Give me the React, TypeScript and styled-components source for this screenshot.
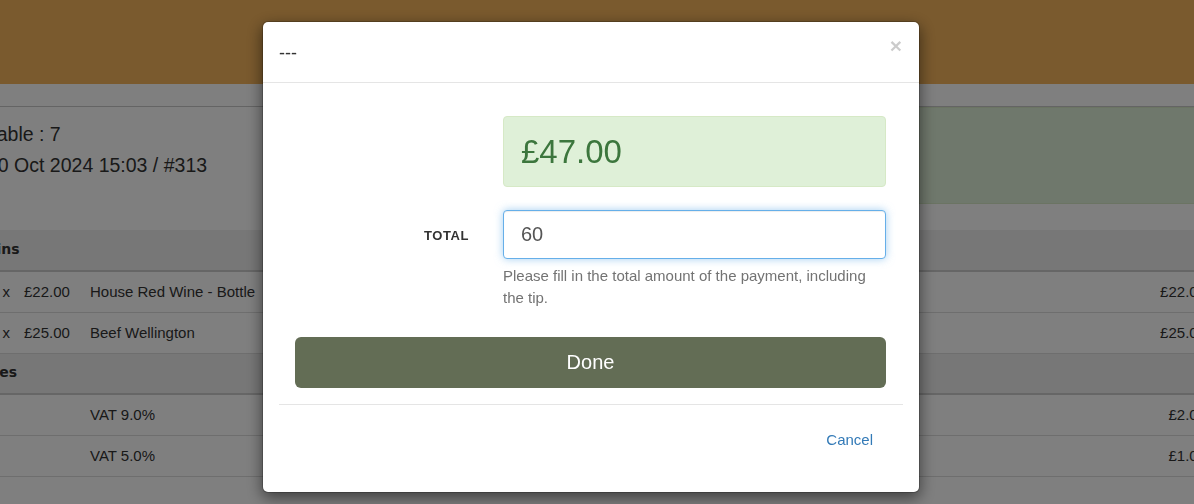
import React, { useEffect, useRef } from "react";
import styled, { createGlobalStyle } from "styled-components";

const GlobalStyle = createGlobalStyle`
  html, body {
    margin: 0;
    padding: 0;
    background: #fff;
    overflow: hidden;
  }
  body {
    font-family: "Liberation Sans", Arial, sans-serif;
    font-size: 14px;
    line-height: 1.42857;
    color: #333;
  }
  * {
    box-sizing: border-box;
  }
`;

const Page = styled.div`
  margin-left: -35px;
  width: calc(100vw + 55px);
  height: 504px;
`;

const TopBar = styled.header`
  height: 84px;
  background: #f4b45c;
`;

const SubBar = styled.div`
  height: 23px;
  border-bottom: 1px solid #c8c8c8;
`;

const Info = styled.section`
  display: grid;
  grid-template-columns: 1fr 560px;
  height: 97px;
`;

const InfoText = styled.div`
  padding: 12px 0 0 22px;
  font-size: 19.5px;
  line-height: 31px;
  color: #333;
`;

const StatusBox = styled.div`
  background: #dff0d8;
  border: 1px solid #d6e9c6;
`;

const Table = styled.table`
  margin-top: 26px;
  width: 100%;
  border-collapse: collapse;
  font-size: 15px;
  line-height: 20px;
`;

const GroupCell = styled.th`
  height: 41px;
  padding: 0 8px 2px;
  text-align: left;
  font-family: "DejaVu Sans", "Liberation Sans", sans-serif;
  font-size: 14px;
  font-weight: bold;
  line-height: 20px;
  background: #eee;
  border-bottom: 2px solid #ccc;
`;

const Cell = styled.td<{ $align?: "left" | "right"; $width?: number }>`
  height: 41px;
  padding: 0 8px;
  text-align: ${(p) => p.$align || "left"};
  width: ${(p) => (p.$width ? `${p.$width}px` : "auto")};
  border-bottom: 1px solid #ddd;
  white-space: nowrap;
`;

const PriceCell = styled(Cell)`
  padding-left: 6px;
`;

const Backdrop = styled.div`
  position: fixed;
  inset: 0;
  background: rgba(0, 0, 0, 0.5);
`;

const Modal = styled.div`
  position: fixed;
  top: 21px;
  left: 262px;
  width: 658px;
  background: #fff;
  border: 1px solid rgba(0, 0, 0, 0.2);
  border-radius: 6px;
  box-shadow: 0 5px 15px rgba(0, 0, 0, 0.5);
  background-clip: padding-box;
`;

const ModalHeader = styled.div`
  display: flex;
  align-items: center;
  justify-content: space-between;
  height: 61px;
  padding: 4px 17px 0 16px;
  border-bottom: 1px solid #e5e5e5;
`;

const Title = styled.h4`
  margin: 0;
  font-size: 18px;
  font-weight: normal;
  color: #333;
`;

const Close = styled.button`
  align-self: flex-start;
  margin-top: 9px;
  padding: 0;
  border: 0;
  background: transparent;
  font-family: "Liberation Sans", Arial, sans-serif;
  font-size: 21px;
  font-weight: bold;
  line-height: 1;
  color: #000;
  opacity: 0.2;
  cursor: pointer;
`;

const ModalBody = styled.div`
  padding: 33px 33px 16px 32px;
`;

const FormRow = styled.div<{ $gap?: number }>`
  display: grid;
  grid-template-columns: 208px 1fr;
  align-items: center;
  margin-bottom: ${(p) => p.$gap ?? 0}px;
`;

const Label = styled.label`
  padding: 4px 34px 0 0;
  text-align: right;
  font-size: 13px;
  font-weight: bold;
  letter-spacing: 0.6px;
  color: #333;
`;

const AmountBox = styled.div`
  height: 71px;
  padding: 0 17px;
  display: flex;
  align-items: center;
  background: #dff0d8;
  border: 1px solid #d6e9c6;
  border-radius: 4px;
  color: #3c763d;
  font-size: 33px;
`;

const Input = styled.input`
  width: 100%;
  height: 49px;
  padding: 0 17px;
  font-family: "Liberation Sans", Arial, sans-serif;
  font-size: 20px;
  color: #555;
  border: 1px solid #66afe9;
  border-radius: 4px;
  outline: 0;
  box-shadow: inset 0 1px 1px rgba(0, 0, 0, 0.075),
    0 0 8px rgba(102, 175, 233, 0.6);
`;

const Help = styled.p`
  grid-column: 2;
  margin: 6px 0 0;
  font-size: 15px;
  line-height: 22px;
  color: #737373;
`;

const DoneButton = styled.button`
  display: block;
  width: 100%;
  height: 51px;
  margin-top: 28px;
  border: 0;
  border-radius: 6px;
  background: #636d55;
  color: #fff;
  font-family: "Liberation Sans", Arial, sans-serif;
  font-size: 20px;
  cursor: pointer;
`;

const ModalFooter = styled.div`
  display: flex;
  justify-content: flex-end;
  margin: 0 16px;
  padding: 25px 30px 42px;
  border-top: 1px solid #e5e5e5;
`;

const LinkButton = styled.a`
  font-size: 15px;
  line-height: 20px;
  color: #337ab7;
  text-decoration: none;
  cursor: pointer;
`;

type Line = { qty: number; price: string; name: string; total: string };

const items: Line[] = [
  { qty: 1, price: "£22.00", name: "House Red Wine - Bottle", total: "£22.00" },
  { qty: 1, price: "£25.00", name: "Beef Wellington", total: "£25.00" },
];

const taxes = [
  { name: "VAT 9.0%", total: "£2.00" },
  { name: "VAT 5.0%", total: "£1.00" },
];

const App = () => {
  const inputRef = useRef<HTMLInputElement>(null);

  useEffect(() => {
    const el = inputRef.current;
    if (el) {
      el.focus();
      el.setSelectionRange(el.value.length, el.value.length);
    }
  }, []);

  return (
    <>
      <GlobalStyle />
      <Page>
        <TopBar />
        <SubBar />
        <Info>
          <InfoText>
            <div>Table : 7</div>
            <div>10 Oct 2024 15:03 / #313</div>
          </InfoText>
          <StatusBox />
        </Info>
        <Table>
          <tbody>
            <tr>
              <GroupCell colSpan={4}>Mains</GroupCell>
            </tr>
            {items.map((item) => (
              <tr key={item.name}>
                <Cell $align="right" $width={53}>
                  {item.qty} x
                </Cell>
                <PriceCell $width={64}>{item.price}</PriceCell>
                <Cell>{item.name}</Cell>
                <Cell $align="right">{item.total}</Cell>
              </tr>
            ))}
            <tr>
              <GroupCell colSpan={4}>Taxes</GroupCell>
            </tr>
            {taxes.map((tax) => (
              <tr key={tax.name}>
                <Cell $width={53} />
                <PriceCell $width={64} />
                <Cell>{tax.name}</Cell>
                <Cell $align="right">{tax.total}</Cell>
              </tr>
            ))}
          </tbody>
        </Table>
      </Page>

      <Backdrop />
      <Modal role="dialog">
        <ModalHeader>
          <Title>---</Title>
          <Close aria-label="Close">×</Close>
        </ModalHeader>
        <ModalBody>
          <FormRow $gap={23}>
            <span />
            <AmountBox>£47.00</AmountBox>
          </FormRow>
          <FormRow>
            <Label htmlFor="total">TOTAL</Label>
            <Input id="total" ref={inputRef} defaultValue="60" />
            <Help>
              Please fill in the total amount of the payment, including the tip.
            </Help>
          </FormRow>
          <DoneButton>Done</DoneButton>
        </ModalBody>
        <ModalFooter>
          <LinkButton>Cancel</LinkButton>
        </ModalFooter>
      </Modal>
    </>
  );
};

export default App;
